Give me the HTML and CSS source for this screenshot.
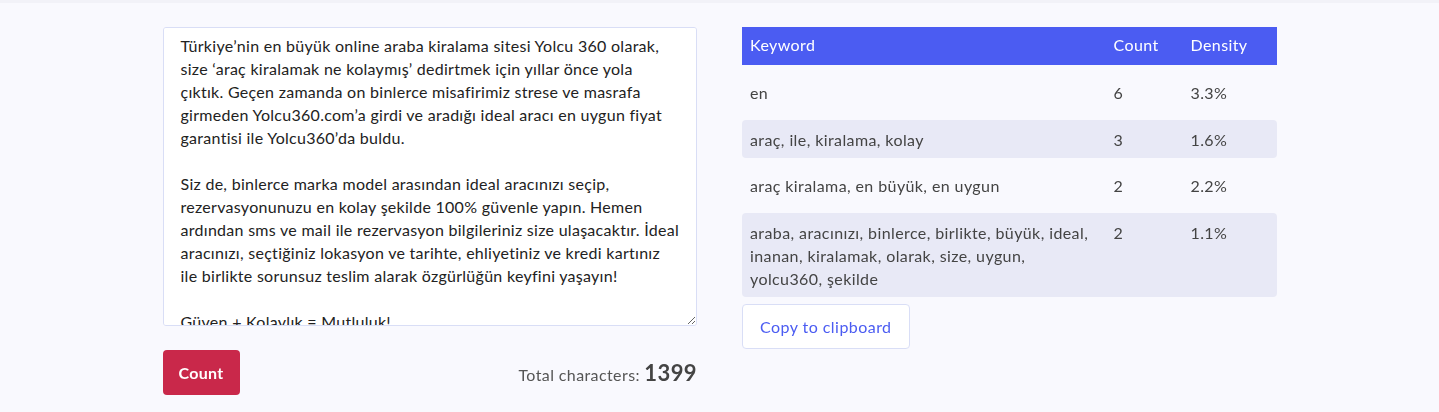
FILE: index.html
```html
<!DOCTYPE html>
<html lang="tr">
<head>
  <meta charset="UTF-8" />
  <meta name="viewport" content="width=device-width, initial-scale=1.0"/>
  <title>Keyword Density</title>
  <link rel="stylesheet" href="styles.css">
</head>
<body>
  <div class="topbar"></div>
  <div class="wrap">
    <div class="left">
      <textarea class="text-input" id="text">Türkiye’nin en büyük online araba kiralama sitesi Yolcu 360 olarak, size ‘araç kiralamak ne kolaymış’ dedirtmek için yıllar önce yola çıktık. Geçen zamanda on binlerce misafirimiz strese ve masrafa girmeden Yolcu360.com’a girdi ve aradığı ideal aracı en uygun fiyat garantisi ile Yolcu360’da buldu.

Siz de, binlerce marka model arasından ideal aracınızı seçip, rezervasyonunuzu en kolay şekilde 100% güvenle yapın. Hemen ardından sms ve mail ile rezervasyon bilgileriniz size ulaşacaktır. İdeal aracınızı, seçtiğiniz lokasyon ve tarihte, ehliyetiniz ve kredi kartınız ile birlikte sorunsuz teslim alarak özgürlüğün keyfini yaşayın!

Güven + Kolaylık = Mutluluk!

Yolcu360’a inanan ve binlerce kez araç kiralama işlemini en büyük güvenle tamamlayan misafirlerimiz ile birlikte büyümeye devam ediyoruz.</textarea>
      <div class="actions">
        <button class="count-btn">Count</button>
        <div class="total">Total characters: <b>1399</b></div>
      </div>
    </div>
    <div class="right">
      <table class="kw-table">
        <thead>
          <tr><th>Keyword</th><th class="c-count">Count</th><th class="c-dens">Density</th></tr>
        </thead>
        <tbody>
          <tr class="tall"><td>en</td><td>6</td><td>3.3%</td></tr>
          <tr class="stripe"><td>araç, ile, kiralama, kolay</td><td>3</td><td>1.6%</td></tr>
          <tr class="tall"><td>araç kiralama, en büyük, en uygun</td><td>2</td><td>2.2%</td></tr>
          <tr class="stripe"><td>araba, aracınızı, binlerce, birlikte, büyük, ideal, inanan, kiralamak, olarak, size, uygun, yolcu360, şekilde</td><td>2</td><td>1.1%</td></tr>
        </tbody>
      </table>
      <button class="copy-btn">Copy to clipboard</button>
    </div>
  </div>
</body>
</html>
```

FILE: styles.css
```css
body {
  margin: 0;
  font-family: Lato, "Noto Sans", sans-serif;
  letter-spacing: 0.4px;
  background: #f9f9fe;
  color: #444;
}
.topbar {
  height: 3px;
  background: #f2f2f8;
}
.wrap {
  width: 1114px;
  margin: 0 auto;
  padding-top: 24px;
  display: flex;
  gap: 45px;
}
.left, .right {
  width: 535px;
}
.text-input {
  display: block;
  box-sizing: border-box;
  width: 100%;
  height: 299px;
  padding: 6px 17px;
  border: 1px solid #d9def6;
  border-radius: 3px;
  background: #fff;
  font-family: inherit;
  font-size: 16px;
  line-height: 23px;
  letter-spacing: 0.28px;
  color: #222;
  resize: vertical;
  scrollbar-width: none;
}
.actions {
  margin-top: 24px;
  display: flex;
  justify-content: space-between;
  align-items: center;
}
.count-btn {
  height: 45px;
  padding: 0 16px;
  background: #c9284a;
  color: #fff;
  border: none;
  border-radius: 4px;
  font-family: inherit;
  font-size: 16px;
  font-weight: 700;
  letter-spacing: 0.3px;
}
.total {
  font-size: 16px;
  color: #555;
}
.total b {
  font-size: 22px;
  color: #444;
}
.kw-table {
  width: 100%;
  border-collapse: collapse;
  font-size: 16px;
  line-height: 23px;
}
.kw-table th {
  background: #4b5cf2;
  color: #fff;
  font-weight: 400;
  text-align: left;
  padding: 6px 8px 9px;
}
.kw-table td {
  padding: 16px 8px;
  vertical-align: top;
  color: #444;
}
.kw-table .c-count { width: 61px; }
.kw-table .c-dens { width: 78px; }
.kw-table tr.stripe td {
  background: #e8e9f6;
  padding: 8px 8px 7px;
}
.kw-table tr.stripe td:first-child { border-radius: 4px 0 0 4px; }
.kw-table tr.stripe td:last-child { border-radius: 0 4px 4px 0; }
.copy-btn {
  margin-top: 7px;
  height: 45px;
  padding: 0 17px;
  background: #fff;
  color: #4b5cf2;
  border: 1px solid #d9def6;
  border-radius: 4px;
  font-family: inherit;
  font-size: 16px;
  letter-spacing: 0.45px;
}
```
